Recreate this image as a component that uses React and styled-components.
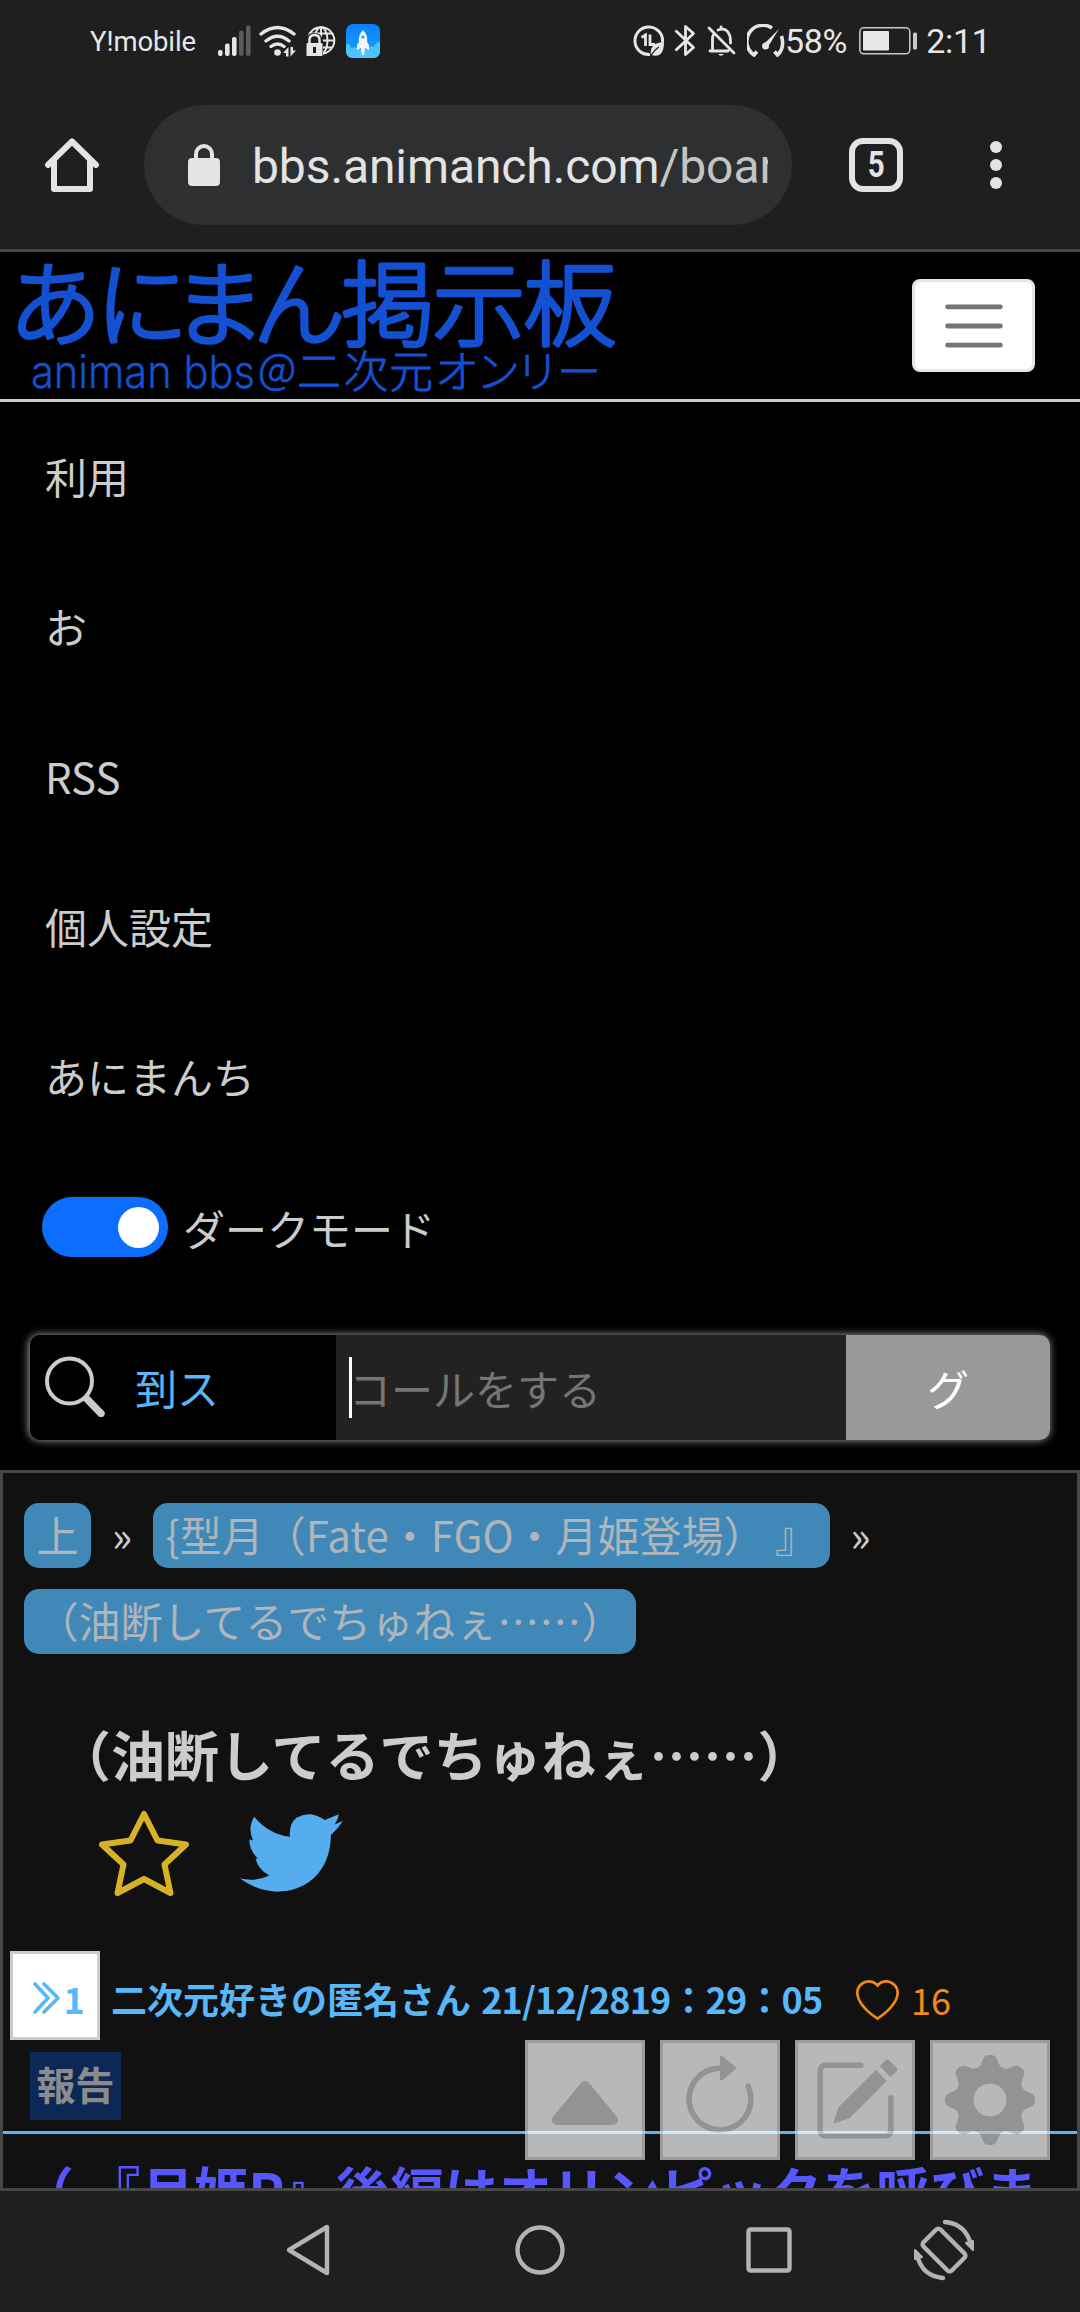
import React from 'react';
import styled, { createGlobalStyle } from 'styled-components';
import { BsArrowClockwise, BsPencilSquare, BsHeart } from 'react-icons/bs';

const GlobalStyle = createGlobalStyle`
body {
  margin: 0;
  background: #000;
}
* {
  box-sizing: border-box;
}
svg {
  display: block;
  flex-shrink: 0;
}
`;

const Screen = styled.div`
  width: 1080px;
  height: 2312px;
  display: flex;
  flex-direction: column;
  overflow: hidden;
  background: #000;
  color: #ccc;
  font-family: "Noto Sans CJK JP", sans-serif;
  font-size: 42px;
  text-spacing-trim: space-all;
`;

/* ---------- status bar ---------- */

const StatusBar = styled.div`
  height: 81px;
  flex-shrink: 0;
  padding: 0 96px 0 90px;
  display: flex;
  justify-content: space-between;
  background: #1f1f1f;
  color: #e6e6e6;
  font-family: Roboto, sans-serif;
`;

const StatusGroup = styled.div`
  height: 81px;
  display: flex;
  align-items: center;
`;

const Carrier = styled.span`
  width: 128px;
  padding-top: 2px;
  font-size: 27.5px;
  letter-spacing: -0.1px;
`;

const StatusText = styled.span`
  width: ${props => props.w}px;
  font-size: 34px;
  letter-spacing: -0.3px;
  white-space: nowrap;
`;

const StatusIcon = styled.span`
  width: ${props => props.w}px;
  margin-left: ${props => props.gap || 0}px;
  display: flex;
  justify-content: center;
`;

/* ---------- browser toolbar ---------- */

const Toolbar = styled.div`
  height: 171px;
  flex-shrink: 0;
  padding-left: 45px;
  display: flex;
  align-items: center;
  background: #1f1f1f;
  border-bottom: 3px solid #474747;
`;

const AddressBar = styled.div`
  width: 648px;
  height: 120px;
  margin: 0 57px 0 45px;
  padding: 0 24px 0 44px;
  display: flex;
  align-items: center;
  gap: 32px;
  border-radius: 60px;
  background: #2e2f31;
`;

const Url = styled.div`
  flex: 1;
  padding-top: 3px;
  overflow: hidden;
  white-space: nowrap;
  font-family: Roboto, sans-serif;
  font-size: 48px;
  letter-spacing: -0.1px;
  color: #e3e3e3;
`;

const UrlPath = styled.span`
  color: #c3c4c4;
`;

const TabCount = styled.div`
  width: 54px;
  height: 54px;
  display: flex;
  align-items: center;
  justify-content: center;
  border: 6px solid #e3e3e3;
  border-radius: 14px;
  font-family: Roboto, sans-serif;
  font-size: 36px;
  font-weight: 700;
  color: #e3e3e3;
`;

const TabNumber = styled.span`
  transform: scaleX(0.82);
`;

const Dots = styled.div`
  margin-left: 87px;
  display: flex;
  flex-direction: column;
  gap: 6px;
`;

const Dot = styled.i`
  width: 12px;
  height: 12px;
  border-radius: 50%;
  background: #e3e3e3;
`;

/* ---------- site header ---------- */

const SiteHeader = styled.header`
  height: 150px;
  flex-shrink: 0;
  padding-right: 45px;
  display: flex;
  align-items: center;
  justify-content: space-between;
  border-bottom: 3px solid #ccc;
`;

const LogoArt = styled.svg`
  overflow: visible;
`;

const MenuButton = styled.button`
  width: 123px;
  height: 93px;
  padding: 0;
  display: flex;
  align-items: center;
  justify-content: center;
  border: 3px solid #e5e5e5;
  border-radius: 8px;
  background: #fff;
`;

const MenuItem = styled.a`
  flex-shrink: 0;
  height: 148px;
  margin-bottom: 2px;
  padding-left: 45px;
  line-height: 148px;
`;

const ToggleRow = styled.div`
  height: 150px;
  flex-shrink: 0;
  padding-left: 42px;
  display: flex;
  align-items: center;
  gap: 15px;
`;

const Toggle = styled.div`
  width: 126px;
  height: 60px;
  padding: 0 9px;
  display: flex;
  align-items: center;
  justify-content: flex-end;
  border-radius: 30px;
  background: #0d6efd;
`;

const Knob = styled.div`
  width: 41px;
  height: 41px;
  border-radius: 50%;
  background: #fff;
`;

const SearchBar = styled.div`
  height: 105px;
  flex-shrink: 0;
  margin: 33px 30px 30px;
  display: flex;
  border-radius: 10px;
  overflow: hidden;
  box-shadow: -1px 0 8px #aaa;
`;

const SearchType = styled.div`
  width: 306px;
  padding: 0 0 2px 15px;
  display: flex;
  align-items: center;
  gap: 30px;
  background: #000;
  color: #59b7f7;
`;

const SearchInput = styled.div`
  flex: 1;
  padding: 0 0 1px 13px;
  display: flex;
  align-items: center;
  background: #222;
  color: #757575;
`;

const Caret = styled.i`
  width: 3px;
  height: 61px;
  margin-right: -3px;
  background: #fff;
`;

const SearchButton = styled.div`
  width: 204px;
  display: flex;
  align-items: center;
  justify-content: center;
  background: #999;
  color: #fff;
`;

/* ---------- thread ---------- */

const Thread = styled.main`
  position: relative;
  height: 718px;
  flex-shrink: 0;
  overflow: hidden;
  display: flex;
  flex-direction: column;
  border: 3px solid #474747;
  border-bottom: 0;
  background: #111;
`;

const Crumbs = styled.nav`
  padding: 30px 21px 0;
  display: flex;
  flex-wrap: wrap;
  row-gap: 21px;
`;

const Crumb = styled.a`
  height: 65px;
  padding: 0 12.500px;
  line-height: 62px;
  border-radius: 15px;
  background: #4088b8;
  color: #afb5b9;
  white-space: pre;
`;

const CrumbSep = styled.span`
  width: 62px;
  line-height: 62px;
  text-align: center;
  font-size: 42px;
`;

const Title = styled.h1`
  margin: 59px 0 0 54px;
  font-size: 54px;
  font-weight: 700;
  line-height: 81px;
`;

const Actions = styled.div`
  height: 90px;
  margin: 14px 0 0 96px;
  display: flex;
  align-items: center;
  gap: 51px;
`;

const PostHead = styled.div`
  height: 89px;
  margin: 53px 0 0 7px;
  flex-shrink: 0;
  display: flex;
  align-items: center;
  font-size: 36px;
`;

const PostNumber = styled.div`
  width: 90px;
  height: 89px;
  margin-right: 11px;
  padding: 4px 0 0 8px;
  display: flex;
  align-items: center;
  justify-content: center;
  gap: 3px;
  border: 3px solid #ccc;
  background: #fff;
  color: #58b7f8;
  font-weight: 700;
`;

const PostMeta = styled.span`
  width: 745px;
  padding-top: 4px;
  color: #58b7f8;
  font-weight: 700;
  white-space: nowrap;
`;

const PostDate = styled.span`
  margin-left: 2px;
  letter-spacing: -0.850px;
`;

const Likes = styled.span`
  padding-top: 6px;
  display: flex;
  align-items: center;
  gap: 12px;
  color: #f28a17;
`;

const HeartIcon = styled(BsHeart)`
  margin-top: 6px;
`;

const Report = styled.a`
  align-self: flex-start;
  height: 68px;
  flex-shrink: 0;
  margin: 12px 0 11px 27px;
  padding: 0 6.500px;
  background: #0b2857;
  color: #8b8b8b;
  font-size: 39px;
  font-weight: 700;
  line-height: 63px;
`;

const PostBody = styled.div`
  flex-shrink: 0;
  padding: 15px 0 0 17px;
  border-top: 3px solid #5fb4ef;
  color: #5757ff;
  font-size: 54px;
  font-weight: 700;
  line-height: 81px;
  white-space: nowrap;
`;

const Narrow = styled.span`
  letter-spacing: -3px;
`;

const FloatingTools = styled.div`
  position: absolute;
  right: 27px;
  bottom: 28px;
  display: flex;
  gap: 15px;
`;

const ToolButton = styled.button`
  width: 120px;
  height: 120px;
  padding: 0 0 ${props => props.lift || 0}px;
  display: flex;
  align-items: center;
  justify-content: center;
  border: 3px solid #d6d6d6;
  background: #fff;
  color: #cacaca;
  opacity: 0.7;
`;

/* ---------- system navigation ---------- */

const NavBar = styled.div`
  flex: 1;
  padding: 0 0 3px 272px;
  display: flex;
  align-items: center;
  border-top: 3px solid #474747;
  background: #1f1f1f;
`;

const NavKey = styled.div`
  width: 72px;
  margin-right: ${props => props.gap}px;
`;

/* ---------- icons ---------- */

function SignalIcon() {
  return (
    <svg width="34" height="32" viewBox="0 0 34 32" fill="#e6e6e6">
      <rect x="0" y="25" width="4.6" height="6" rx="2" />
      <rect x="7" y="18.5" width="4.6" height="12.5" rx="2" />
      <rect x="14" y="12" width="4.6" height="19" rx="2" />
      <rect x="21" y="5.5" width="4.6" height="25.5" rx="2" fill="#5c5c5c" />
      <rect x="28" y="0.5" width="4.6" height="30.5" rx="2" fill="#5c5c5c" />
    </svg>
  );
}

function WifiIcon() {
  return (
    <svg width="38" height="32" viewBox="0 0 38 32" fill="none" stroke="#e6e6e6" strokeWidth="3.4" strokeLinecap="round">
      <path d="M2 9Q18.5-4 35 9M7 16q11.5-9.500 23 0M12 21.500q6.500-5 13 0" />
      <circle cx="18.500" cy="27.500" r="3.300" fill="#e6e6e6" stroke="none" />
      <path d="M29.500 31.500V22l-5.500 6h3v3.500zM31.500 22v9.500l5.500-6h-3V22z" fill="#e6e6e6" stroke="none" />
    </svg>
  );
}

function VpnIcon() {
  return (
    <svg width="30" height="32" viewBox="0 0 30 32" fill="none" stroke="#e6e6e6" strokeWidth="2">
      <circle cx="15" cy="15.500" r="13.300" />
      <ellipse cx="15" cy="15.500" rx="6.500" ry="13.300" />
      <path d="M15 2v27M2 15.500h26M4 8.500h22M4 22.500h22" />
      <path d="M0 32V16q0-8 8-8t9 8v16z" fill="#1f1f1f" stroke="none" />
      <path d="M3.500 19v-4q0-5 5-5t5 5v4" strokeWidth="2.500" />
      <rect x="0.500" y="18" width="16" height="13" rx="1" fill="#e6e6e6" stroke="none" />
      <path d="M8.500 22v6" stroke="#1f1f1f" strokeWidth="3" />
    </svg>
  );
}

function RocketIcon() {
  return (
    <svg width="34" height="34" viewBox="0 0 34 34">
      <defs>
        <linearGradient id="sky" x1="0" y1="0" x2="0" y2="1">
          <stop offset="0" stopColor="#0a80ff" />
          <stop offset="1" stopColor="#16a6ff" />
        </linearGradient>
      </defs>
      <rect width="34" height="34" rx="7" fill="url(#sky)" />
      <path d="M0 20q4-1 5 4 5-2 7 1h10q2-4 6-2 1-5 6-5v9q0 7-7 7H7q-7 0-7-7z" fill="#4dc3ff" />
      <path d="M17 6q5 5 4 12l2 3v5l-4-2-1 7h-2l-1-7-4 2v-5l2-3q-1-7 4-12z" fill="#f2f6fa" />
      <circle cx="17" cy="13" r="1.600" fill="#2a9cff" />
    </svg>
  );
}

function DataSaverIcon() {
  return (
    <svg width="32" height="32" viewBox="0 0 32 32" fill="none" stroke="#e6e6e6" strokeWidth="3">
      <path d="M17 29.500A13.800 13.800 0 1 1 29.500 17" />
      <path d="M8.500 12.500l4-2.500V21M17 9.500V19.500h5" strokeWidth="2.800" />
      <path d="M31 17q-15 1-13 13 13 4 13-13z" fill="#e6e6e6" stroke="none" />
      <path d="M18 31q3-6 8-9" stroke="#1f1f1f" strokeWidth="1.300" />
    </svg>
  );
}

function BluetoothIcon() {
  return (
    <svg width="22" height="33" viewBox="0 0 22 33" fill="none" stroke="#e6e6e6" strokeWidth="2.800" strokeLinejoin="round">
      <path d="M1.500 6.500L19.500 23.500 11.500 30.500V2.500l8 7L1.500 26.500" />
    </svg>
  );
}

function BellOffIcon() {
  return (
    <svg width="29" height="32" viewBox="0 0 29 32" fill="none" stroke="#e6e6e6" strokeWidth="2.800" strokeLinecap="round">
      <path d="M2 3l25 25M3 26h18M5.500 25V13q0-2 1.500-4M11 5q8-3 11 4 1.500 2 1.500 9M14 4V2" />
      <path d="M11 29h6q-3 3.500-6 0z" fill="#e6e6e6" stroke="none" />
    </svg>
  );
}

function GaugeIcon() {
  return (
    <svg width="38" height="33" viewBox="0 0 38 33" fill="none" stroke="#e6e6e6" strokeWidth="3.600">
      <path d="M25 4A15.500 15.500 0 0 0 7 31l3-3.500M34.500 12Q38 24 30.500 31l-3-3.500" />
      <path d="M32 5L20.500 23.500q-4 2-5-2z" fill="#e6e6e6" stroke="none" />
      <circle cx="18.500" cy="22" r="3.500" fill="#e6e6e6" stroke="none" />
    </svg>
  );
}

function BatteryIcon() {
  return (
    <svg width="59" height="28" viewBox="0 0 59 28">
      <rect x="0.800" y="0.800" width="50" height="26" rx="4" fill="none" stroke="#c9c9c9" strokeWidth="1.500" />
      <rect x="4" y="4" width="26" height="19.500" rx="1" fill="#e6e6e6" />
      <rect x="54" y="5.500" width="4" height="17" rx="1.500" fill="#c9c9c9" />
    </svg>
  );
}

function HomeIcon() {
  return (
    <svg width="54" height="54" viewBox="0 0 54 54" fill="none" stroke="#e3e3e3" strokeWidth="6" strokeLinecap="round" strokeLinejoin="round">
      <path d="M3 27L27 3.500 51 27" />
      <path d="M9 23v28h36V23" />
    </svg>
  );
}

function LockIcon() {
  return (
    <svg width="32" height="42" viewBox="0 0 32 42">
      <rect y="14" width="32" height="28" rx="4" fill="#e3e3e3" />
      <path d="M8 16V10a8 8 0 0 1 16 0v6" fill="none" stroke="#e3e3e3" strokeWidth="4" />
    </svg>
  );
}

function Logo() {
  return (
    <LogoArt width="630" height="147" viewBox="0 252 630 147" fill="#1450d2" stroke="#1450d2" strokeLinejoin="round" textAnchor="middle">
      <text x="55 142 219 299 388 479 570" y="338.500" fontSize="93" fontWeight="300" strokeWidth="3.600">あにまん掲示板</text>
      <g fontSize="44" fontWeight="300" strokeWidth="0.900">
        <text x="31" y="387.500" fontFamily="Inter" fontSize="45" strokeWidth="0.300" textAnchor="start" textLength="224" lengthAdjust="spacingAndGlyphs">animan bbs</text>
        <text x="277" y="384" fontSize="42">@</text>
        <text x="319 366 411 457 498 537.500 579" y="388">二次元オンリー</text>
      </g>
    </LogoArt>
  );
}

function SearchIcon() {
  return (
    <svg width="60" height="61" viewBox="0 0 60 61" fill="none" stroke="#ccc" strokeLinecap="round">
      <circle cx="24.500" cy="25" r="22.500" strokeWidth="4" />
      <path d="M42 43l14 14.500" strokeWidth="7.500" />
    </svg>
  );
}

function StarIcon() {
  return (
    <svg width="90" height="90" viewBox="99 1808 90 90" fill="none" stroke="#d6b227" strokeWidth="6" strokeLinejoin="round">
      <path d="M144 1814l13.500 26.500 28.500 4-21.500 20 6 28.500-26.500-14-26.500 14 6-28.500-21.500-20 28.500-4z" />
    </svg>
  );
}

function BirdIcon() {
  return (
    <svg width="103" height="78" viewBox="697 345 299 233" preserveAspectRatio="none" fill="#55acee">
      <path d="M697 538Q745 548 782 529 750 512 742 478L749 479Q724 452 724 421L735 424Q718 390 738 353 780 405 842 413 838 375 861 356 900 332 943 363L984 346Q982 362 972 376L996 365Q982 388 961 408 960 490 910 538 865 578 803 577 745 574 697 538z" />
    </svg>
  );
}

function QuoteIcon() {
  return (
    <svg width="27" height="32" viewBox="0 0 27 32" fill="none" stroke="#58b7f8" strokeWidth="3.600" strokeLinecap="round" strokeLinejoin="round">
      <path d="M2 2l13 14L2 30M11 2l14 14-14 14" />
    </svg>
  );
}

function UpIcon() {
  return (
    <svg width="66" height="66" viewBox="0 0 66 66" fill="currentColor" stroke="currentColor" strokeWidth="10" strokeLinejoin="round">
      <path d="M33 20L61 54H5z" />
    </svg>
  );
}

// cog outline: a circle whose radius swells eight times
function gearPath() {
  let d = '';
  for (let i = 0; i < 240; i++) {
    const a = (i / 240) * Math.PI * 2;
    const c = Math.cos(a * 8);
    const r = 39.8 + 5.2 * Math.tanh(c * 1.3) / Math.tanh(1.3);
    d += (i ? 'L' : 'M') + (45 + r * Math.cos(a)).toFixed(2) + ' ' + (45 + r * Math.sin(a)).toFixed(2);
  }
  return d + 'zM61.500 45a16.500 16.500 0 1 0-33 0 16.500 16.500 0 1 0 33 0z';
}

function GearIcon() {
  return (
    <svg width="90" height="90" viewBox="0 0 90 90" fill="currentColor" fillRule="evenodd">
      <path d={gearPath()} />
    </svg>
  );
}

function NavIcon({ children }) {
  return (
    <svg width="72" height="72" viewBox="0 0 72 72" fill="none" stroke="#b3b3b3" strokeWidth="4.400" strokeLinejoin="round" strokeLinecap="round">
      {children}
    </svg>
  );
}

const menu = ['利用', 'お', 'RSS', '個人設定', 'あにまんち'];

function App() {
  return (
    <Screen>
      <GlobalStyle />
      <StatusBar>
        <StatusGroup>
          <Carrier>Y!mobile</Carrier>
          <StatusIcon w={34}><SignalIcon /></StatusIcon>
          <StatusIcon w={38} gap={7}><WifiIcon /></StatusIcon>
          <StatusIcon w={30} gap={9}><VpnIcon /></StatusIcon>
          <StatusIcon w={34} gap={10}><RocketIcon /></StatusIcon>
        </StatusGroup>
        <StatusGroup>
          <StatusIcon w={32}><DataSaverIcon /></StatusIcon>
          <StatusIcon w={22} gap={9}><BluetoothIcon /></StatusIcon>
          <StatusIcon w={29} gap={11}><BellOffIcon /></StatusIcon>
          <StatusIcon w={38} gap={11}><GaugeIcon /></StatusIcon>
          <StatusText w={71}>58%</StatusText>
          <StatusIcon w={59} gap={3}><BatteryIcon /></StatusIcon>
          <StatusText w={66}>&nbsp;2:11</StatusText>
        </StatusGroup>
      </StatusBar>

      <Toolbar>
        <HomeIcon />
        <AddressBar>
          <LockIcon />
          <Url>bbs.animanch.com<UrlPath>/board</UrlPath></Url>
        </AddressBar>
        <TabCount><TabNumber>5</TabNumber></TabCount>
        <Dots><Dot /><Dot /><Dot /></Dots>
      </Toolbar>

      <SiteHeader>
        <Logo />
        <MenuButton>
          <svg width="72" height="72" viewBox="0 0 30 30" stroke="#757575" strokeWidth="2" strokeLinecap="round">
            <path d="M4 7h22M4 15h22M4 23h22" />
          </svg>
        </MenuButton>
      </SiteHeader>

      {menu.map(item => <MenuItem key={item}>{item}</MenuItem>)}
      <ToggleRow>
        <Toggle><Knob /></Toggle>
        ダークモード
      </ToggleRow>
      <SearchBar>
        <SearchType><SearchIcon />到ス</SearchType>
        <SearchInput><Caret />コールをする</SearchInput>
        <SearchButton>グ</SearchButton>
      </SearchBar>

      <Thread>
        <Crumbs>
          <Crumb>上</Crumb>
          <CrumbSep>»</CrumbSep>
          <Crumb>{'{型月（Fate・FGO・月姫登場） 』'}</Crumb>
          <CrumbSep>»</CrumbSep>
          <Crumb>（油断してるでちゅねぇ……）</Crumb>
        </Crumbs>
        <Title>（油断してるでちゅねぇ……）</Title>
        <Actions>
          <StarIcon />
          <BirdIcon />
        </Actions>
        <PostHead>
          <PostNumber><QuoteIcon />1</PostNumber>
          <PostMeta>
            二次元好きの匿名さん <PostDate>21/12/2819：29：05</PostDate>
          </PostMeta>
          <Likes><HeartIcon size={43} />16</Likes>
        </PostHead>
        <Report>報告</Report>
        <PostBody>（ 『月姫<Narrow>R</Narrow>』後編はオリンピックを呼びま</PostBody>
        <FloatingTools>
          <ToolButton lift={2}><UpIcon /></ToolButton>
          <ToolButton lift={2}><BsArrowClockwise size={90} /></ToolButton>
          <ToolButton><BsPencilSquare size={87} /></ToolButton>
          <ToolButton><GearIcon /></ToolButton>
        </FloatingTools>
      </Thread>

      <NavBar>
        <NavKey gap={160}>
          <NavIcon><path d="M17 36L55 13v46z" /></NavIcon>
        </NavKey>
        <NavKey gap={157}>
          <NavIcon><circle cx="36" cy="36" r="22.500" /></NavIcon>
        </NavKey>
        <NavKey gap={103}>
          <NavIcon><rect x="15.500" y="15.500" width="41" height="41" rx="2" /></NavIcon>
        </NavKey>
        <NavKey gap={0}>
          <NavIcon>
            <rect x="24" y="16" width="24" height="40" rx="3" transform="rotate(-45 36 36)" />
            <path d="M37 8Q58 10 63 31M35 64Q14 62 9 41" />
            <path d="M58 29l7 7V27zM14 43l-7-7v9z" fill="#b3b3b3" strokeWidth="2" />
          </NavIcon>
        </NavKey>
      </NavBar>
    </Screen>
  );
}

export default App;
